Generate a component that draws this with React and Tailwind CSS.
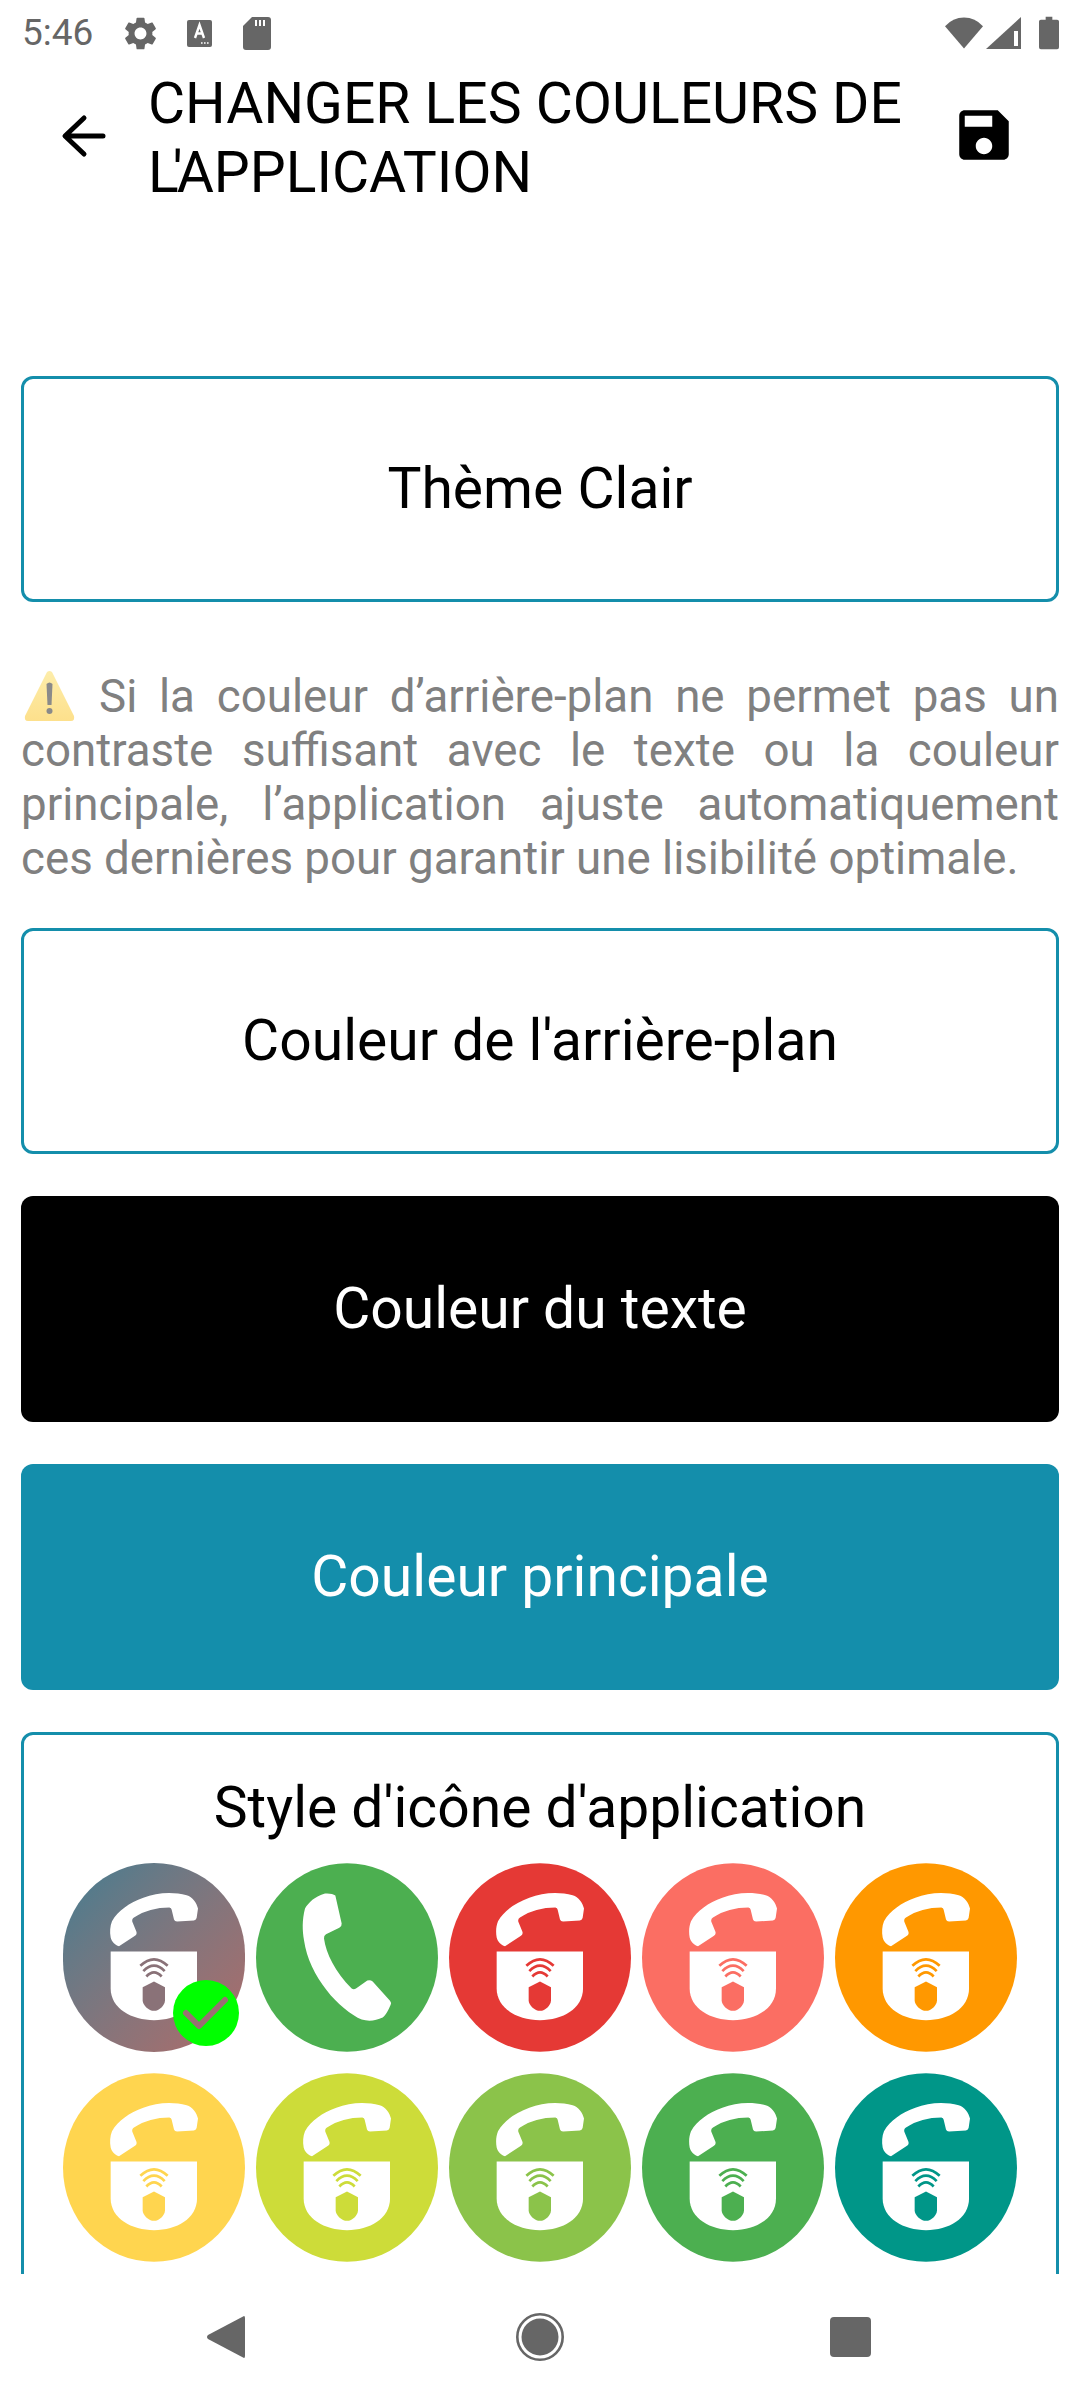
const colors = ['#E53935', '#FB6E63', '#FF9800', '#FFD54F', '#CDDC39', '#8BC34A', '#4CAF50', '#009688']

function LockIcon({ bg, cut }) {
  return (
    <svg viewBox="69 69 546 566" width="182" height="189" className="block">
      {bg ? <ellipse cx="342" cy="352" rx="273" ry="283" fill={bg} /> : null}
      <path fill="#fff" d="M237 318 L285 287 Q292 282 289 274 L277 245 Q275 236 282 232 C312 212 350 202 388 202 Q394 203 395 209 L402 238 Q404 244 411 244 L462 241 Q469 240 470 233 L474 205 C470 188 458 170 440 165 C400 154 350 156 310 173 C268 188 234 212 216 243 C210 258 209 275 212 292 C215 304 225 315 237 318 Z" />
      <path fill="#fff" d="M212 334 H471 V445 C471 505 410 540 342 540 C275 540 212 505 212 445 Z" />
      <g fill="none" stroke={cut} strokeWidth="8">
        <path d="M301 377 Q342 338 383 377" />
        <path d="M310 393 Q342 360 374 393" />
        <path d="M319 409 Q342 384 365 409" />
      </g>
      <path fill={cut} d="M342 424 L375 441 V480 C375 495 358 512 342 512 C326 512 308 495 308 480 V441 Z" />
    </svg>
  )
}

function PhoneIcon() {
  return (
    <svg viewBox="648 69 546 566" width="182" height="189" className="block">
      <ellipse cx="921" cy="352" rx="273" ry="283" fill="#4CAF50" />
      <path fill="#fff" d="M855 160 C868 159 880 161 886 166 L905 250 Q906 258 898 263 L858 282 Q851 286 852 295 C858 340 885 395 935 445 Q941 449 948 445 L982 421 Q991 418 998 424 L1050 482 Q1055 488 1052 494 C1045 510 1038 525 1028 532 C1008 542 985 544 965 538 C935 525 890 490 860 450 C825 405 800 355 792 300 C787 270 786 240 795 205 C805 188 825 168 855 160 Z" />
    </svg>
  )
}

function ColorButton({ label, className }) {
  return (
    <div className={`h-[226px] rounded-[12px] flex items-center justify-center text-[57px] ${className}`}>
      {label}
    </div>
  )
}

function WarningGlyph() {
  return (
    <svg viewBox="0 0 51 51" width="51" height="51" className="inline-block align-[-9px] ml-[3px] mr-[24px]">
      <defs>
        <linearGradient id="warn" x1="0" y1="0" x2="0" y2="1">
          <stop offset="0" stopColor="#FDEDAA" />
          <stop offset="1" stopColor="#FDE08C" />
        </linearGradient>
      </defs>
      <path d="M25.5 1 Q23 1 22 4 L1 46 Q0 51 4 51 H47 Q51 51 50 46 L29 4 Q28 1 25.5 1 Z" fill="url(#warn)" />
      <path d="M22.5 14 Q25.5 11 28.5 14 L27.5 35 H23.5 Z" fill="#8a8a8a" />
      <circle cx="25.5" cy="41" r="3" fill="#8a8a8a" />
    </svg>
  )
}

export default function App() {
  return (
    <div className="w-[1080px] h-[2400px] bg-white flex flex-col overflow-hidden font-['Roboto',sans-serif]">

      {/* status bar */}
      <div className="h-[66px] shrink-0 flex items-center pl-[22px] pr-[21px] text-[#666666]">
        <span className="text-[37px] w-[102px] leading-none mt-[-1px]">5:46</span>
        <svg viewBox="2 2 20 20" width="33" height="33" fill="#666666">
          <path d="M19.14 12.94c.04-.3.06-.61.06-.94 0-.32-.02-.64-.07-.94l2.03-1.58c.18-.14.23-.41.12-.61l-1.92-3.32c-.12-.22-.37-.29-.59-.22l-2.39.96c-.5-.38-1.03-.7-1.62-.94l-.36-2.54c-.04-.24-.24-.41-.48-.41h-3.84c-.24 0-.43.17-.47.41l-.36 2.54c-.59.24-1.13.57-1.62.94l-2.39-.96c-.22-.08-.47 0-.59.22L2.74 8.87c-.12.21-.08.47.12.61l2.03 1.58c-.05.3-.09.63-.09.94s.02.64.07.94l-2.03 1.58c-.18.14-.23.41-.12.61l1.92 3.32c.12.22.37.29.59.22l2.39-.96c.5.38 1.03.7 1.62.94l.36 2.54c.05.24.24.41.48.41h3.84c.24 0 .44-.17.47-.41l.36-2.54c.59-.24 1.13-.56 1.62-.94l2.39.96c.22.08.47 0 .59-.22l1.92-3.32c.12-.22.07-.47-.12-.61l-2.01-1.58zM12 15.6c-1.98 0-3.6-1.62-3.6-3.6s1.62-3.6 3.6-3.6 3.6 1.62 3.6 3.6-1.62 3.6-3.6 3.6z" />
        </svg>
        <svg viewBox="0 0 25 27" width="25" height="27" className="ml-[30px]">
          <rect width="25" height="27" rx="2" fill="#666666" />
          <path d="M8 18 L12.5 5 L17 18 M9.6 13.5 H15.4" fill="none" stroke="#fff" strokeWidth="2.4" />
          <path d="M14 23 h1.6 M17 23 h1.6 M20 23 h1.6" stroke="#fff" strokeWidth="1.6" />
        </svg>
        <svg viewBox="0 0 28 33" width="28" height="33" className="ml-[31px]">
          <path d="M9 0 H25 Q28 0 28 3 V30 Q28 33 25 33 H3 Q0 33 0 30 V9 Z" fill="#666666" />
          <path d="M13 3 V9 M17 3 V9 M21 3 V9" stroke="#fff" strokeWidth="2" />
        </svg>
        <div className="flex-1" />
        <svg viewBox="0 0 39 32" width="38" height="32">
          <path d="M19.5 32 L0 9 Q8 0 19.5 0 Q31 0 39 9 Z" fill="#666666" />
        </svg>
        <svg viewBox="0 0 35 32" width="35" height="32" className="ml-[3px]">
          <path d="M35 0 V32 H0 Z" fill="#666666" />
          <path d="M28 14 H32 V29 H28 Z" fill="#fff" />
        </svg>
        <svg viewBox="0 0 21 34" width="20" height="34" className="ml-[18px]">
          <path d="M7 0 H14 V3 H19 Q21 3 21 5 V32 Q21 34 19 34 H2 Q0 34 0 32 V5 Q0 3 2 3 H7 Z" fill="#666666" />
        </svg>
      </div>

      {/* header */}
      <div className="h-[138px] shrink-0 flex items-center pl-[51px] pr-[63px]">
        <svg viewBox="0 0 66 66" width="66" height="66" fill="none" stroke="#000" strokeWidth="5" strokeLinecap="round" strokeLinejoin="round">
          <path d="M52 34 H15 M33 16 L14 34 L33 52" />
        </svg>
        <div className="ml-[31px] mt-[5px] flex-1 text-[57px] leading-[69px] text-black">
          CHANGER LES COULEURS DE <span className="tracking-[-6px]">L'</span>APPLICATION
        </div>
        <svg viewBox="0 0 24 24" width="66" height="66" fill="#000">
          <path d="M17 3H5c-1.11 0-2 .9-2 2v14c0 1.1.89 2 2 2h14c1.1 0 2-.9 2-2V7l-4-4zm-5 16c-1.66 0-3-1.34-3-3s1.34-3 3-3 3 1.34 3 3-1.34 3-3 3zm3-10H5V5h10v4z" />
        </svg>
      </div>

      {/* content, cut off above the nav bar */}
      <div className="flex-1 min-h-0 overflow-hidden px-[21px] pt-[172px]">
        <ColorButton label="Thème Clair" className="border-[3px] border-[#148EAB] text-black" />

        <p className="mt-[68px] text-[45.7px] leading-[54px] text-[#808080] text-justify">
          <WarningGlyph />
          Si la couleur d’arrière-plan ne permet pas un contraste suffisant avec le texte ou la couleur principale, l’application ajuste automatiquement ces dernières pour garantir une lisibilité optimale.
        </p>

        <ColorButton label="Couleur de l'arrière-plan" className="mt-[42px] border-[3px] border-[#148EAB] text-black" />
        <ColorButton label="Couleur du texte" className="mt-[42px] bg-black text-white" />
        <ColorButton label="Couleur principale" className="mt-[42px] bg-[#148EAB] text-white" />

        <div className="mt-[42px] border-[3px] border-[#148EAB] rounded-[12px] px-[39px] pb-[60px]">
          <div className="text-[57px] text-black text-center leading-[64px] pt-[41px]">Style d'icône d'application</div>
          <div className="flex flex-wrap justify-between gap-y-[21px] mt-[23px]">
            <div className="relative w-[182px] h-[189px]">
              <div className="rounded-full overflow-hidden w-[182px] h-[189px] bg-gradient-to-br from-[#3F7C90] to-[#AF6A68]">
                <LockIcon cut="#8A7278" />
              </div>
              <div className="absolute left-[110px] top-[117px] w-[66px] h-[66px] rounded-full bg-[#00FF00] flex items-center justify-center">
                <svg viewBox="0 0 66 66" width="66" height="66">
                  <path d="M13 33 L26 46 L52 20" fill="none" stroke="#9A6F72" strokeWidth="6" strokeLinecap="round" strokeLinejoin="round" />
                </svg>
              </div>
            </div>
            <PhoneIcon />
            {colors.map(c => (
              <LockIcon key={c} bg={c} cut={c} />
            ))}
          </div>
        </div>
      </div>

      {/* nav bar */}
      <div className="h-[126px] shrink-0 bg-white">
        <div className="flex items-center h-full">
          <svg viewBox="0 0 38 42" width="38" height="42" className="ml-[207px]" fill="#666666">
            <path d="M37 0 Q38 0 38 2 V40 Q38 42 37 42 L1 23 Q-1 21 1 19 Z" />
          </svg>
          <svg viewBox="0 0 48 48" width="48" height="48" className="ml-[271px]">
            <circle cx="24" cy="24" r="22.7" fill="none" stroke="#666666" strokeWidth="2.6" />
            <circle cx="24" cy="24" r="18.5" fill="#666666" />
          </svg>
          <div className="ml-[266px] w-[41px] h-[40px] rounded-[4px] bg-[#666666]" />
        </div>
      </div>
    </div>
  )
}
